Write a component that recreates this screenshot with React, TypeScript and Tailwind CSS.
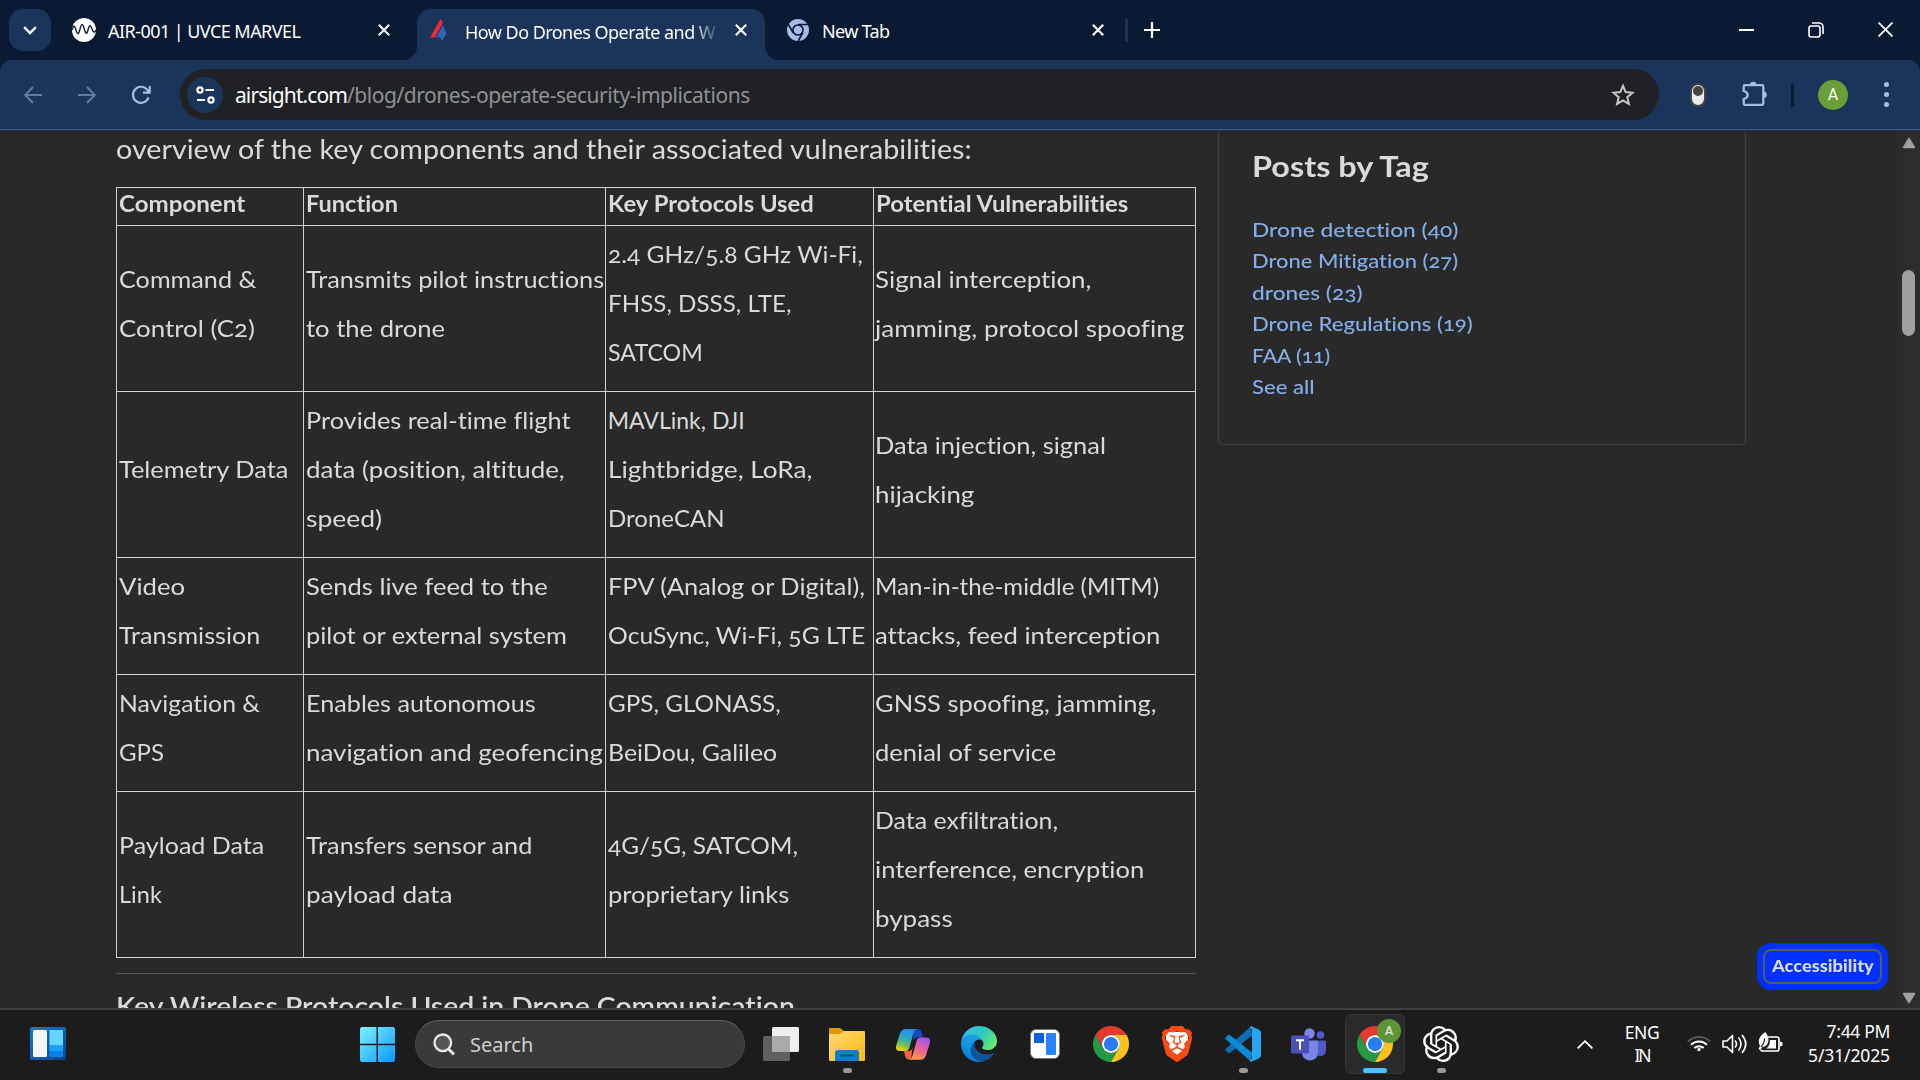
import { useLayoutEffect, useRef, useState } from 'react';
import type { ReactNode } from 'react';
import { SiBrave, SiOpenai } from 'react-icons/si';

/** One line of interface text whose tracking is adjusted so that it spans `w` pixels. */
function Line({ text, w, className = '' }: { text: string; w: number; className?: string }) {
  const ref = useRef<HTMLSpanElement>(null);
  const [spacing, setSpacing] = useState(0);
  useLayoutEffect(() => {
    if (ref.current && text.length > 1) {
      const natural = ref.current.offsetWidth - spacing * text.length;
      setSpacing((w - natural) / (text.length - 1));
    }
  }, [text, w]);
  return (
    <span ref={ref} className={`inline-block whitespace-pre ${className}`} style={{ letterSpacing: `${spacing}px` }}>
      {text}
    </span>
  );
}

/** One line of article text, its letters widened so that it spans `w` pixels. */
function Wide({ text, w }: { text: string; w: number }) {
  const ref = useRef<HTMLSpanElement>(null);
  const [scale, setScale] = useState(1);
  useLayoutEffect(() => {
    if (ref.current) setScale(w / ref.current.offsetWidth);
  }, [text, w]);
  return (
    <span ref={ref} className="inline-block origin-left whitespace-pre" style={{ transform: `scaleX(${scale})` }}>
      {text}
    </span>
  );
}

type L = [string, number];

const headers: L[] = [
  ['Component', 126],
  ['Function', 92],
  ['Key Protocols Used', 206],
  ['Potential Vulnerabilities', 252],
];

const rows: L[][][] = [
  [
    [['Command &', 137], ['Control (C2)', 136]],
    [['Transmits pilot instructions', 298], ['to the drone', 139]],
    [['2.4 GHz/5.8 GHz Wi-Fi,', 255], ['FHSS, DSSS, LTE,', 183], ['SATCOM', 95]],
    [['Signal interception,', 216], ['jamming, protocol spoofing', 309]],
  ],
  [
    [['Telemetry Data', 169]],
    [['Provides real-time flight', 265], ['data (position, altitude,', 259], ['speed)', 76]],
    [['MAVLink, DJI', 137], ['Lightbridge, LoRa,', 204], ['DroneCAN', 117]],
    [['Data injection, signal', 231], ['hijacking', 99]],
  ],
  [
    [['Video', 66], ['Transmission', 141]],
    [['Sends live feed to the', 242], ['pilot or external system', 261]],
    [['FPV (Analog or Digital),', 257], ['OcuSync, Wi-Fi, 5G LTE', 257]],
    [['Man-in-the-middle (MITM)', 284], ['attacks, feed interception', 285]],
  ],
  [
    [['Navigation &', 141], ['GPS', 45]],
    [['Enables autonomous', 230], ['navigation and geofencing', 297]],
    [['GPS, GLONASS,', 173], ['BeiDou, Galileo', 169]],
    [['GNSS spoofing, jamming,', 282], ['denial of service', 181]],
  ],
  [
    [['Payload Data', 145], ['Link', 43]],
    [['Transfers sensor and', 226], ['payload data', 146]],
    [['4G/5G, SATCOM,', 190], ['proprietary links', 181]],
    [['Data exfiltration,', 183], ['interference, encryption', 269], ['bypass', 78]],
  ],
];

const tags: L[] = [
  ['Drone detection (40)', 206],
  ['Drone Mitigation (27)', 206],
  ['drones (23)', 110],
  ['Drone Regulations (19)', 221],
  ['FAA (11)', 78],
  ['See all', 63],
];

function Cross() {
  return (
    <svg width="12" height="12" viewBox="0 0 12 12" className="shrink-0" stroke="#fff" strokeWidth="2.1">
      <path d="M.8.8l10.4 10.4M11.2.8L.8 11.2" />
    </svg>
  );
}

function TabStrip() {
  return (
    <div className="flex h-[60px] items-start bg-[#0a1a33] text-[18px] text-white">
      <div className="mt-[9px] ml-[9px] flex h-[42px] w-[42px] items-center justify-center rounded-[14px] bg-[#1a345b]">
        <svg width="14" height="9" viewBox="0 0 14 9" fill="none" stroke="#fff" strokeWidth="2.4"><path d="M1.2 1.2L7 7l5.8-5.8" /></svg>
      </div>
      <div className="ml-[21px] flex h-[60px] w-[333px] items-center">
        <svg width="24" height="24" viewBox="0 0 24 24" fill="none">
          <circle cx="12" cy="12" r="12" fill="#fff" />
          <path d="M0 12c1.500-5 2.500-5 4 0s2.500 5 4-1 2.500-6 4-1 2.500 8 4 2 2.500-5 4-1 2.500 4 4 1" stroke="#0a1a33" strokeWidth="1.400" />
        </svg>
        <div className="ml-3 h-[50px] w-[270px] leading-[52px]"><Line text="AIR-001 | UVCE MARVEL" w={193} /></div>
        <Cross />
      </div>
      <div className="relative mt-[9px] ml-[12px] flex h-[51px] w-[348px] items-center rounded-t-[14px] bg-[#1a345b]">
        <svg width="14" height="14" className="absolute bottom-0 -left-[14px]" fill="#1a345b"><path d="M14 0A14 14 0 0 1 0 14h14z" /></svg>
        <svg width="14" height="14" className="absolute -right-[14px] bottom-0" fill="#1a345b"><path d="M0 0a14 14 0 0 0 14 14H0z" /></svg>
        <svg width="22" height="22" viewBox="0 0 22 22" className="mb-[9px] ml-[13px]">
          <path d="M16 8l6 11-5-1.500-3-3z" fill="#22306f" />
          <path d="M13 6l3.500 8.500-2 3.500-2.500 4-2-4-4 .5z" fill="#2f66b8" />
          <path d="M10.500 0l2.500 3.500L5 18.500H0z" fill="#f5292b" />
        </svg>
        <div className="mb-[8px] ml-[13px] h-[50px] w-[255px] overflow-hidden leading-[52px] [mask-image:linear-gradient(to_right,#000_226px,transparent_256px)]">
          <Line text="How Do Drones Operate and W" w={251} />
        </div>
        <div className="mb-[9px] ml-[15px]"><Cross /></div>
      </div>
      <div className="ml-[22px] flex h-[60px] w-[317px] items-center">
        <svg width="22" height="22" viewBox="0 0 48 48" fill="#a6bce4" stroke="#0a1a33" strokeWidth="3.500">
          <circle cx="24" cy="24" r="24" stroke="none" />
          <path d="M24 12h22M13.600 30L2.500 11M34.400 30L24 49" fill="none" />
          <circle cx="24" cy="24" r="11" />
        </svg>
        <div className="ml-[13px] h-[50px] w-[270px] leading-[52px]"><Line text="New Tab" w={68} /></div>
        <Cross />
      </div>
      <div className="mt-[18px] ml-[21px] h-6 w-[3px] rounded bg-[#1a345b]" />
      <svg width="16" height="16" viewBox="0 0 16 16" className="mt-[22px] ml-[16px]" stroke="#fff" strokeWidth="2.200"><path d="M8 0v16M0 8h16" /></svg>
      <div className="mr-[27px] ml-auto flex h-[59px] items-center gap-[54px]">
        <div className="h-[2px] w-[15px] bg-white" />
        <svg width="16" height="16" viewBox="0 0 16 16" fill="none" stroke="#fff" strokeWidth="1.600"><rect x="1" y="4" width="11" height="11" rx="2.200" /><path d="M4 1h7a4 4 0 0 1 4 4v7" /></svg>
        <svg width="15" height="15" viewBox="0 0 15 15" stroke="#fff" strokeWidth="1.700"><path d="M.5.5l14 14M14.500.5l-14 14" /></svg>
      </div>
    </div>
  );
}

function Toolbar() {
  return (
    <div className="bg-[#0a1a33]">
      <div className="flex h-[71px] items-start rounded-t-[12px] bg-[#1a345b]">
        <div className="flex h-[70px] w-full items-center border-b border-[#3f5878]">
          <svg width="18" height="18" viewBox="0 0 18 18" className="ml-[24px]" fill="none" stroke="#5f7ba5" strokeWidth="2"><path d="M18 9H1.500M9 1L1.200 9 9 17" /></svg>
          <svg width="18" height="18" viewBox="0 0 18 18" className="ml-[36px]" fill="none" stroke="#5f7ba5" strokeWidth="2"><path d="M0 9h16.500M9 1l7.800 8L9 17" /></svg>
          <svg width="20" height="20" viewBox="0 0 20 20" className="ml-[35px]" fill="none" stroke="#a6bce4" strokeWidth="2.200"><path d="M17.500 12.500A8 8 0 1 1 16 4.500l2 2.500M18.700 1v6.700H12" /></svg>
          <div className="ml-[29px] flex h-[51px] w-[1479px] items-center rounded-full bg-[#202124]">
            <div className="ml-[7px] flex h-9 w-9 items-center justify-center rounded-full bg-[#1a345b]">
              <svg width="19" height="18" viewBox="0 0 19 18" fill="none" stroke="#fff" strokeWidth="2.200"><circle cx="4" cy="4" r="2.600" /><path d="M9.500 4H18M1 14h8" /><circle cx="15" cy="14" r="2.600" /></svg>
            </div>
            <div className="ml-[12px] flex leading-[50px] text-[#8f9193]">
              <Line text="airsight.com" w={113} className="text-[21px] text-white" />
              <Line text="/blog/drones-operate-security-implications" w={403} className="text-[21px]" />
            </div>
            <svg width="24" height="24" viewBox="0 0 24 24" className="mr-[24px] ml-auto" fill="none" stroke="#c7c7c7" strokeWidth="2"><path d="M12 2.800l2.700 6.300 6.800.6-5.200 4.500 1.600 6.700-5.900-3.600-5.900 3.600 1.600-6.700-5.200-4.500 6.800-.6z" /></svg>
          </div>
          <div className="ml-[31px] h-6 w-4 rounded-full border-2 border-[#444] bg-[#ececec] px-px pt-px"><div className="h-[10px] w-[10px] rounded-full bg-[#454545]" /></div>
          <svg width="25" height="25" viewBox="0 0 25 25" className="mb-[2px] ml-[36px]" fill="none" stroke="#a6bce4" strokeWidth="2.300">
            <path d="M3 4.200h17q1.300 0 1.300 1.300v17q0 1.300-1.300 1.300H3q-1.300 0-1.300-1.300v-4.500c5.300-1.500 5.300-6.500 0-8V5.500Q1.700 4.200 3 4.200z" />
            <path d="M8 4a3.300 3.300 0 0 1 6.600 0zM21.500 10.500a3.300 3.300 0 0 1 0 6.600z" fill="#a6bce4" stroke="none" />
          </svg>
          <div className="ml-[24px] h-6 w-[3px] rounded bg-[#0a1a33]" />
          <div className="ml-[24px] flex h-[30px] w-[30px] items-center justify-center rounded-full bg-[#689f38] font-[Roboto] text-[16px] text-white">A</div>
          <div className="ml-[36px] flex flex-col gap-[5px]">
            <i className="h-[5px] w-[5px] rounded-full bg-[#a6bce4]" /><i className="h-[5px] w-[5px] rounded-full bg-[#a6bce4]" /><i className="h-[5px] w-[5px] rounded-full bg-[#a6bce4]" />
          </div>
        </div>
      </div>
    </div>
  );
}

function ComponentTable() {
  return (
    <div className="mt-[17px] grid w-[1080px] grid-cols-[187px_302px_268px_322px] grid-rows-[38px_166px_166px_117px_117px_166px] border-t border-l border-[#d0d0d0]">
      {headers.map(([t, w]) => (
        <div key={t} className="border-r border-b border-[#d0d0d0] pl-[1.5px] text-[22px] leading-[31px] font-bold"><Wide text={t} w={w} /></div>
      ))}
      {rows.map((r, i) =>
        r.map((cell, j) => (
          <div key={`${i}-${j}`} className={`flex flex-col justify-center border-r border-b border-[#d0d0d0] pt-[4px] pb-[14px] text-[23px] leading-[49px] ${j === 3 ? 'pl-px' : 'pl-[1.7px]'}`}>
            {cell.map(([t, w]) => <div key={t} className="h-[49px]"><Wide text={t} w={w} /></div>)}
          </div>
        )),
      )}
    </div>
  );
}

function Page() {
  return (
    <div className="flex h-[877px] overflow-hidden bg-[#292929] font-[Lato] text-[#dadada] [font-feature-settings:'onum','liga'_0]">
      <div className="ml-[116px] w-[1080px] shrink-0">
        <div className="h-[39px] text-[27px] leading-[36px]"><Wide text="overview of the key components and their associated vulnerabilities:" w={856} /></div>
        <ComponentTable />
        <div className="mt-[15px] h-px bg-[#555]" />
        <div className="mt-[14px] h-[20px] text-[27px] leading-[36px] font-semibold"><Wide text="Key Wireless Protocols Used in Drone Communication" w={679} /></div>
      </div>
      <div className="ml-[22px] h-[314px] w-[528px] shrink-0 rounded-b-[5px] border border-t-0 border-[#404040] pl-[33px]">
        <div className="mt-[15px] h-10 text-[28px] leading-[41px] font-bold"><Wide text="Posts by Tag" w={177} /></div>
        <div className="mt-[28px] text-[20px] leading-[31.400px] font-medium text-[#86ade8]">
          {tags.map(([t, w]) => <div key={t} className="h-[31.400px]"><Wide text={t} w={w} /></div>)}
        </div>
      </div>
      <div className="mt-auto mr-[9px] mb-[18px] ml-auto flex h-[47px] w-[131px] items-center justify-center rounded-[14px] bg-[#0030ff]">
        <div className="flex h-[35px] w-[119px] items-center rounded-[8px] border-2 border-[#5a5a5a] pb-[2px] pl-[7px] text-[17px] font-black"><Wide text="Accessibility" w={102} /></div>
      </div>
      <div className="flex w-[23px] flex-col items-center bg-[#2c2c2c]">
        <svg width="14" height="12" viewBox="0 0 14 12" className="mt-[6px]" fill="#a0a0a0"><path d="M7 1.500L12.500 10.500H1.500z" stroke="#a0a0a0" strokeWidth="1.500" strokeLinejoin="round" /></svg>
        <div className="mt-[121px] h-[66px] w-[13px] rounded-full bg-[#9f9f9f]" />
        <svg width="14" height="12" viewBox="0 0 14 12" className="mt-auto mb-[4px]" fill="#a0a0a0"><path d="M7 10.500L12.500 1.500H1.500z" stroke="#a0a0a0" strokeWidth="1.500" strokeLinejoin="round" /></svg>
      </div>
    </div>
  );
}

function Chrome() {
  return (
    <svg width="36" height="36" viewBox="0 0 48 48">
      <path d="M24 12h20.780A24 24 0 0 0 3.220 12l10.390 18A12 12 0 0 1 24 12z" fill="#e33b2e" />
      <path d="M13.610 30L3.220 12A24 24 0 0 0 24 48l10.390-18a12 12 0 0 1-20.780 0z" fill="#249a46" />
      <path d="M34.390 30L24 48a24 24 0 0 0 20.780-36H24a12 12 0 0 1 10.390 18z" fill="#fcc31e" />
      <circle cx="24" cy="24" r="12" fill="#fff" />
      <circle cx="24" cy="24" r="9.500" fill="#2b7cf0" />
    </svg>
  );
}

function Slot({ children, open }: { children: ReactNode; open?: boolean }) {
  return (
    <div className="relative flex h-[70px] w-[66px] items-center justify-center pb-[2px]">
      {children}
      {open && <div className="absolute bottom-[7px] h-[5px] w-[9px] rounded-full bg-[#999]" />}
    </div>
  );
}

function Taskbar() {
  return (
    <div className="flex h-[72px] border-t-2 border-[#404040] bg-[#1c1c1c] text-white">
      <svg width="36" height="33" viewBox="0 0 36 33" className="mt-[17px] ml-[30px]">
        <defs>
          <linearGradient id="wg" x1="0" y1="0" x2="1" y2="1"><stop stopColor="#0a80d8" /><stop offset="1" stopColor="#123f86" /></linearGradient>
        </defs>
        <rect width="36" height="33" rx="2" fill="url(#wg)" />
        <rect x="3" y="3" width="14" height="27" rx="1.500" fill="#f6f6f6" />
        <rect x="19.500" y="3" width="13.500" height="27" rx="1" fill="#0683ea" />
        <path d="M19.500 3H33v15H19.500z" fill="#66d6ff" />
        <path d="M19.500 18H33v6H19.500z" fill="#18a2fb" />
      </svg>
      <svg width="35" height="35" viewBox="0 0 35 35" className="mt-[17px] ml-[294px]">
        <defs>
          <linearGradient id="win" x1="0" y1="0" x2="1" y2="1"><stop stopColor="#7cf3ff" /><stop offset="1" stopColor="#0a96ff" /></linearGradient>
          <clipPath id="winc"><path d="M1.500 0h15v16.800H0V1.500zM18 0h15.500L35 1.500v15.300H18zM0 18.200h16.500V35h-15L0 33.500zM18 18.200h17v15.300L33.500 35H18z" /></clipPath>
        </defs>
        <rect width="35" height="35" fill="url(#win)" clipPath="url(#winc)" />
      </svg>
      <div className="mt-[10px] ml-[20px] flex h-[48px] w-[330px] items-center rounded-full border border-[#454545] border-t-[#606060] bg-[#3a3a3a]">
        <svg width="23" height="23" viewBox="0 0 23 23" className="ml-[17px]" fill="#555" stroke="#e8e8e8" strokeWidth="2.300"><path d="M15.500 16l5.500 5.500" strokeWidth="3" /><circle cx="9.800" cy="9.800" r="8.300" /></svg>
        <div className="mt-px ml-[14px] text-[20px] leading-[40px] text-[#d0d0d0]"><Line text="Search" w={63} /></div>
      </div>
      <div className="ml-[3px] flex">
        <Slot>
          <svg width="36" height="34" viewBox="0 0 36 34">
            <rect y="9" width="27" height="25" rx="1.500" fill="#606060" />
            <rect x="9" width="27" height="25" rx="1.500" fill="#efefef" />
            <path d="M9 9h18v16H9z" fill="#aaa" />
          </svg>
        </Slot>
        <Slot open>
          <svg width="36" height="33" viewBox="0 0 36 33">
            <defs><linearGradient id="fold" x1="0" y1="0" x2="1" y2="1"><stop stopColor="#ffd972" /><stop offset="1" stopColor="#fbb90f" /></linearGradient></defs>
            <path d="M0 1q0-1 1-1h10l4 3h20v8H0z" fill="#dc9a06" />
            <path d="M0 7q0-1 1-1h10l4-3h20q1 0 1 1v28q0 1-1 1H1q-1 0-1-1z" fill="url(#fold)" />
            <path d="M6 33v-8q0-3 3-3h18q3 0 3 3v8z" fill="#0b7fd0" />
            <path d="M11 27.500h14" stroke="#07548f" strokeWidth="2" />
          </svg>
        </Slot>
        <Slot>
          <svg width="34" height="31" viewBox="0 0 34 31">
            <defs>
              <linearGradient id="cpa" x1=".6" y1="0" x2=".3" y2="1"><stop stopColor="#1f8ff0" /><stop offset=".45" stopColor="#2fa9c0" /><stop offset=".75" stopColor="#7cc04a" /><stop offset="1" stopColor="#f3d012" /></linearGradient>
              <linearGradient id="cpb" x1=".7" y1="0" x2=".3" y2="1"><stop stopColor="#a456f0" /><stop offset=".5" stopColor="#e8609c" /><stop offset="1" stopColor="#ff9a4a" /></linearGradient>
            </defs>
            <path d="M17 0h5q3 0 4 4l1.200 4.500H21q-2.500 0-3.500 3.500z" fill="#1747c8" />
            <path d="M8 22h5q2.500 0 3.500-3.500L15 30.500h-2q-3 0-4-4z" fill="#f4643a" />
            <path d="M10 0h11q-2.500.5-3.500 4l-4 14.500q-1 3.500-4 3.500H4q-5 0-3.800-5.500L4 4.500Q5.500 0 10 0z" fill="url(#cpa)" />
            <path d="M24 30.700H13q2.500-.5 3.500-4l4-14.500q1-3.700 4-3.700H30q5 0 3.800 5.500L30 26.200q-1.500 4.500-6 4.500z" fill="url(#cpb)" />
          </svg>
        </Slot>
        <Slot>
          <svg width="36" height="36" viewBox="0 0 256 256">
            <defs>
              <linearGradient id="ea" x1="0" y1="0" x2="1" y2="0"><stop stopColor="#0c59a4" /><stop offset="1" stopColor="#114a8b" /></linearGradient>
              <linearGradient id="eb" x1=".7" y1=".3" x2=".3" y2="1"><stop stopColor="#1b9de2" /><stop offset=".4" stopColor="#1595df" /><stop offset="1" stopColor="#0078d4" /></linearGradient>
              <linearGradient id="ec" x1="0" y1=".2" x2="1" y2=".7"><stop stopColor="#35c1f1" /><stop offset=".5" stopColor="#2cc9c0" /><stop offset="1" stopColor="#66eb6e" /></linearGradient>
            </defs>
            <g transform="translate(-4.600 -4.900)">
              <path d="M235.680 195.460a93.730 93.730 0 0 1-10.540 4.710 101.870 101.870 0 0 1-35.900 6.460c-47.320 0-88.540-32.550-88.540-74.320A31.480 31.480 0 0 1 117.130 104.670c-42.800 1.800-53.800 46.400-53.800 72.530 0 73.880 68.090 81.370 82.760 81.370 7.910 0 19.840-2.300 27-4.560l1.310-.44a128.340 128.340 0 0 0 66.600-52.800 4 4 0 0 0-5.320-5.310z" fill="url(#ea)" />
              <path d="M110.340 246.340A79.200 79.200 0 0 1 87.600 225a80.720 80.720 0 0 1 29.530-120c3.120-1.470 8.450-4.130 15.540-4a32.350 32.350 0 0 1 25.690 13 31.880 31.880 0 0 1 6.360 18.660c0-.21 24.460-79.600-80-79.600-43.900 0-80 41.660-80 78.210a130.150 130.150 0 0 0 12.110 56 128 128 0 0 0 156.380 67.110 75.550 75.550 0 0 1-62.780-8z" fill="url(#eb)" />
              <path d="M156.940 153.780c-.81 1.050-3.300 2.500-3.300 5.660 0 2.610 1.700 5.120 4.720 7.230 14.380 10 41.490 8.680 41.560 8.680A59.560 59.560 0 0 0 230.190 167a61.380 61.380 0 0 0 30.430-52.880c.26-22.410-8-37.310-11.340-43.910C228.090 28.760 182.350 5 132.610 5A128 128 0 0 0 4.630 131.200c.48-36.540 36.800-66.050 80-66.050 3.500 0 23.460.34 42 10.070 16.340 8.580 24.900 18.940 30.850 29.210 6.180 10.670 7.280 24.150 7.280 29.520s-2.740 13.330-7.820 19.830z" fill="url(#ec)" />
            </g>
          </svg>
        </Slot>
        <Slot>
          <svg width="30" height="30" viewBox="0 0 30 30"><rect x=".5" y=".5" width="29" height="29" rx="5.500" fill="#fff" stroke="#777" /><rect x="4" y="4" width="10" height="10" rx="1" fill="#0b62e0" /><rect x="16" y="4" width="10" height="22" rx="1" fill="#2684ff" /></svg>
        </Slot>
        <Slot><Chrome /></Slot>
        <Slot>
          <div className="relative flex h-9 w-9 items-center justify-center">
            <div className="absolute h-6 w-[22px] rounded-b-[9px] bg-white" />
            <SiBrave className="relative h-9 w-9 text-[#fb4a14]" />
          </div>
        </Slot>
        <Slot open>
          <svg width="36" height="36" viewBox="0 0 36 36">
            <path d="M26 .3L.8 22.700q-1 1 0 2l2.300 2q1 .8 2 .1L27 9.500z" fill="#0a6fb5" />
            <path d="M26 35.700L.8 13.300q-1-1 0-2l2.300-2q1-.8 2-.1L27 26.500z" fill="#0c8ad6" />
            <path d="M26.500.2L34.500 4q1.500.7 1.500 2.300v23.400q0 1.600-1.500 2.300l-8 3.800q-1 .4-1.500-.6l2-2.700V3.500l-2-2.700q.5-1 1.500-.6z" fill="#27a5f2" />
          </svg>
        </Slot>
        <Slot>
          <svg width="36" height="33" viewBox="0 0 36 33">
            <circle cx="18.500" cy="5.500" r="5.200" fill="#7b83eb" /><circle cx="29.500" cy="7" r="3.800" fill="#5059c9" />
            <path d="M24 12.500h9.500q1.500 0 1.500 1.500v8q0 6-6 6-4 0-5-4z" fill="#5059c9" />
            <path d="M11 12.500h14.500q1.500 0 1.500 1.500v10q0 8-8 8.500-8-.5-8-8.500z" fill="#7b83eb" />
            <rect y="7.500" width="18" height="18" rx="1.500" fill="#4950b8" />
            <path d="M5 12.300h8M9 12.300v9.500" stroke="#fff" strokeWidth="2" />
          </svg>
        </Slot>
        <Slot>
          <div className="absolute top-[4px] h-[60px] w-[60px] rounded-[6px] border border-[#363636] bg-[#2a2a2a]" />
          <div className="relative"><Chrome />
            <div className="absolute -top-[7px] left-[20px] flex h-6 w-6 items-center justify-center rounded-full bg-[#5f9436] font-[Roboto] text-[13px] font-medium text-[#d8e8c8]">A</div>
          </div>
          <div className="absolute bottom-[7px] h-[5px] w-[24px] rounded-full bg-[#4cc2ff]" />
        </Slot>
        <Slot open><SiOpenai className="h-9 w-9 text-white" /></Slot>
      </div>
      <svg width="16" height="9" viewBox="0 0 16 9" className="mt-[30px] ml-[103px]" fill="none" stroke="#fff" strokeWidth="1.800"><path d="M.6 8.400L8 1.200l7.400 7.200" /></svg>
      <div className="mt-[11px] ml-[26px] flex w-[46px] flex-col items-center text-[17.500px] leading-[22.500px]">
        <Line text="ENG" w={35} /><Line text="IN" w={17} />
      </div>
      <svg width="24" height="18" viewBox="0 0 24 18" className="mt-[24px] ml-[22px]" fill="none" stroke="#fff" strokeWidth="1.900">
        <path d="M.8 7.500a16 16 0 0 1 22.400 0" stroke="#555" /><path d="M4 10.700a11.500 11.500 0 0 1 16 0M7.300 14a7 7 0 0 1 9.400 0" /><circle cx="12" cy="15.500" r="1.700" fill="#fff" stroke="none" />
      </svg>
      <svg width="25" height="20" viewBox="0 0 25 20" className="mt-[24px] ml-[11px]" fill="none" stroke="#fff" strokeWidth="1.600">
        <path d="M1 7h4l5.500-5.500v17L5 13H1z" strokeLinejoin="round" /><path d="M13 6.500q3 3.500 0 7M16.500 3.500q5 6.500 0 13M20 1q7.500 9 0 18" />
      </svg>
      <svg width="25" height="21" viewBox="0 0 25 21" className="mt-[22px] ml-[11px]">
        <path d="M10 5h9q2 0 2 2v10q0 2-2 2H5q-2 0-2-1.500" fill="none" stroke="#fff" strokeWidth="1.700" />
        <path d="M12 8h6v8.500H8q4-2 4-8.500z" fill="#fff" /><path d="M22 9.500l2.500 1v3l-2.500 1z" fill="#fff" />
        <path d="M7.500 0q3 4 3 8-.3 6-6 7L2 18l-1.500-1 1.500-3Q-2 6 7.500 0z" fill="#fff" />
        <path d="M6.500 6.500q0 5-3.500 8.500" stroke="#1c1c1c" strokeWidth="1.200" fill="none" />
      </svg>
      <div className="mt-[10px] mr-[30px] ml-auto flex flex-col items-end text-[17.500px] leading-[23.500px]">
        <Line text="7:44 PM" w={64} /><Line text="5/31/2025" w={82} />
      </div>
    </div>
  );
}

export default function App() {
  return (
    <div className="h-[1080px] w-[1920px] overflow-hidden bg-[#292929] font-['Noto_Sans',sans-serif]">
      <TabStrip />
      <Toolbar />
      <Page />
      <Taskbar />
    </div>
  );
}
